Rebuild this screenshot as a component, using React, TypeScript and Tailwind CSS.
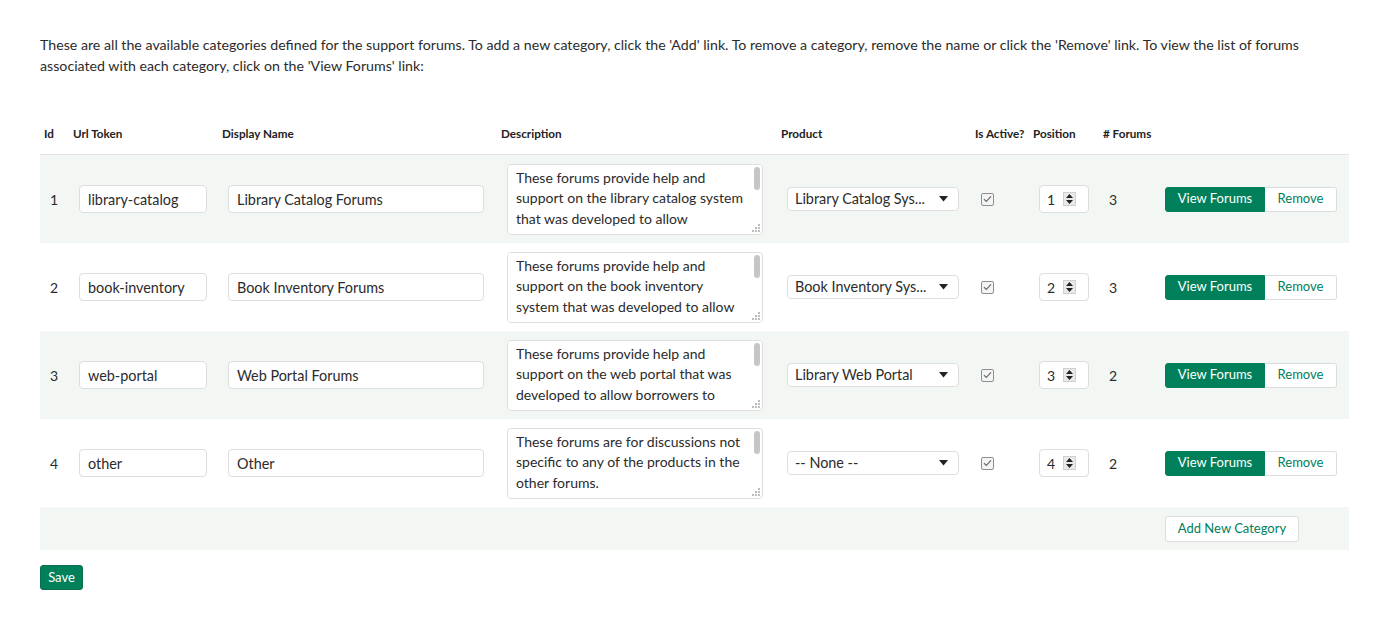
import { useState } from "react";

interface Category {
  id: number;
  token: string;
  name: string;
  description: string;
  product: string;
  active: boolean;
  position: number;
  forums: number;
}

const initialCategories: Category[] = [
  {
    id: 1,
    token: "library-catalog",
    name: "Library Catalog Forums",
    description:
      "These forums provide help and support on the library catalog system that was developed to allow circulation staff and patrons to search and reserve items online.",
    product: "Library Catalog Sys...",
    active: true,
    position: 1,
    forums: 3,
  },
  {
    id: 2,
    token: "book-inventory",
    name: "Book Inventory Forums",
    description:
      "These forums provide help and support on the book inventory system that was developed to allow staff to track the collection.",
    product: "Book Inventory Sys...",
    active: true,
    position: 2,
    forums: 3,
  },
  {
    id: 3,
    token: "web-portal",
    name: "Web Portal Forums",
    description:
      "These forums provide help and support on the web portal that was developed to allow borrowers to manage their accounts.",
    product: "Library Web Portal",
    active: true,
    position: 3,
    forums: 2,
  },
  {
    id: 4,
    token: "other",
    name: "Other",
    description:
      "These forums are for discussions not specific to any of the products in the other forums.",
    product: "-- None --",
    active: true,
    position: 4,
    forums: 2,
  },
];

const cols =
  "grid grid-cols-[29px_149px_279px_280px_194px_58px_70px_56px_1fr]";

function CheckBox() {
  return (
    <span className="flex h-[13px] w-[13px] items-center justify-center rounded-[2px] border border-[#8f8f8f] bg-[#f4f4f4]">
      <svg width="9" height="8" viewBox="0 0 9 8" fill="none">
        <path d="M1 4.2L3.4 6.5L8 1.3" stroke="#6f6f6f" strokeWidth="1.2" />
      </svg>
    </span>
  );
}

function Spinner() {
  return (
    <span className="flex h-[14px] w-[13px] flex-col items-center justify-center gap-[2px] border border-[#cfcfcf] bg-[#e9e9e9]">
      <svg width="7" height="4" viewBox="0 0 7 4">
        <path d="M0 4L3.5 0L7 4Z" fill="#222" />
      </svg>
      <svg width="7" height="4" viewBox="0 0 7 4">
        <path d="M0 0H7L3.5 4Z" fill="#222" />
      </svg>
    </span>
  );
}

function Row({ cat, shaded }: { cat: Category; shaded: boolean }) {
  return (
    <div className={`${cols} h-[88px] items-center text-[14px] ${shaded ? "bg-[#f3f7f4]" : "bg-white"}`}>
      <div className="pl-[10px]">{cat.id}</div>
      <div className="pl-[10px]">
        <input
          defaultValue={cat.token}
          className="h-[28px] w-[128px] rounded-[4px] border border-[#dedede] bg-white px-[8px] text-[14.4px] outline-none"
        />
      </div>
      <div className="pl-[10px]">
        <input
          defaultValue={cat.name}
          className="h-[28px] w-[256px] rounded-[4px] border border-[#dedede] bg-white px-[8px] text-[14.4px] outline-none"
        />
      </div>
      <div className="pl-[10px]">
        <div className="relative w-[256px]">
          <textarea
            defaultValue={cat.description}
            className="block h-[71px] w-[256px] resize-none overflow-y-scroll rounded-[4px] border border-[#dedede] bg-white pl-[8px] pr-[14px] pt-[3px] leading-[20.5px] outline-none [scrollbar-width:none]"
          />
          <span className="absolute left-[247px] top-[3px] h-[23px] w-[6px] rounded-[3px] bg-[#c6c6c6]" />
          <svg className="absolute bottom-[3px] right-[3px]" width="8" height="8" viewBox="0 0 8 8">
            <rect x="6" y="0" width="2" height="2" fill="#bdbdbd" />
            <rect x="3" y="3" width="2" height="2" fill="#bdbdbd" />
            <rect x="6" y="3" width="2" height="2" fill="#bdbdbd" />
            <rect x="0" y="6" width="2" height="2" fill="#bdbdbd" />
            <rect x="3" y="6" width="2" height="2" fill="#bdbdbd" />
            <rect x="6" y="6" width="2" height="2" fill="#bdbdbd" />
          </svg>
        </div>
      </div>
      <div className="pl-[10px]">
        <div className="flex h-[24px] w-[172px] items-center justify-between rounded-[4px] border border-[#dedede] bg-white pl-[7px] pr-[10px] text-[14.4px]">
          <span className="whitespace-nowrap">{cat.product}</span>
          <svg width="9" height="6" viewBox="0 0 9 6">
            <path d="M0 0H9L4.5 5.5Z" fill="#222" />
          </svg>
        </div>
      </div>
      <div className="pl-[10px]">{cat.active && <CheckBox />}</div>
      <div className="pl-[10px]">
        <div className="flex h-[28px] w-[50px] items-center rounded-[4px] border border-[#dedede] bg-white pl-[7px] pr-[10px]">
          <input
            defaultValue={cat.position}
            className="w-[16px] bg-transparent outline-none"
          />
          <Spinner />
        </div>
      </div>
      <div className="pl-[10px]">{cat.forums}</div>
      <div className="flex pl-[10px] text-[13px]">
        <button className="h-[25px] w-[100px] rounded-l-[3px] border border-[#00805a] bg-[#00805a] text-white">
          View Forums
        </button>
        <button className="h-[25px] w-[72px] rounded-r-[3px] border border-l-0 border-[#dcdcdc] bg-white text-[#00805a]">
          Remove
        </button>
      </div>
    </div>
  );
}

export default function App() {
  const [categories] = useState<Category[]>(initialCategories);

  return (
    <div className="min-h-[629px] bg-white px-[40px] pt-[34px] font-['Lato','Open_Sans',sans-serif] text-[14.2px] text-[#2b2b2b]">
      <p className="w-[1309px] leading-[21px]">
        These are all the available categories defined for the support forums. To add a new category, click the 'Add'
        link. To remove a category, remove the name or click the 'Remove' link. To view the list of forums associated
        with each category, click on the 'View Forums' link:
      </p>

      <div className="mt-[36px] w-[1309px]">
        {/* Header */}
        <div className={`${cols} h-[43px] items-end border-b border-[#e3e3e3] pb-[14px] text-[11.7px] font-bold leading-[13px] text-[#222]`}>
          <div className="pl-[4px]">Id</div>
          <div className="pl-[4px]">Url Token</div>
          <div className="pl-[4px]">Display Name</div>
          <div className="pl-[4px]">Description</div>
          <div className="pl-[4px]">Product</div>
          <div className="pl-[4px]">Is Active?</div>
          <div className="pl-[4px]">Position</div>
          <div className="pl-[4px]"># Forums</div>
          <div />
        </div>

        {categories.map((cat, i) => (
          <Row key={cat.id} cat={cat} shaded={i % 2 === 0} />
        ))}

        {/* Footer */}
        <div className={`${cols} h-[43px] items-center bg-[#f3f7f4]`}>
          <div className="col-start-9 pl-[10px]">
            <button className="h-[26px] w-[134px] rounded-[3px] border border-[#dcdcdc] bg-white text-[13px] text-[#00805a]">
              Add New Category
            </button>
          </div>
        </div>
      </div>

      <button className="mt-[15px] h-[25px] w-[43px] rounded-[3px] border border-[#0a6e4d] bg-[#00805a] text-[13px] text-white">
        Save
      </button>
    </div>
  );
}
